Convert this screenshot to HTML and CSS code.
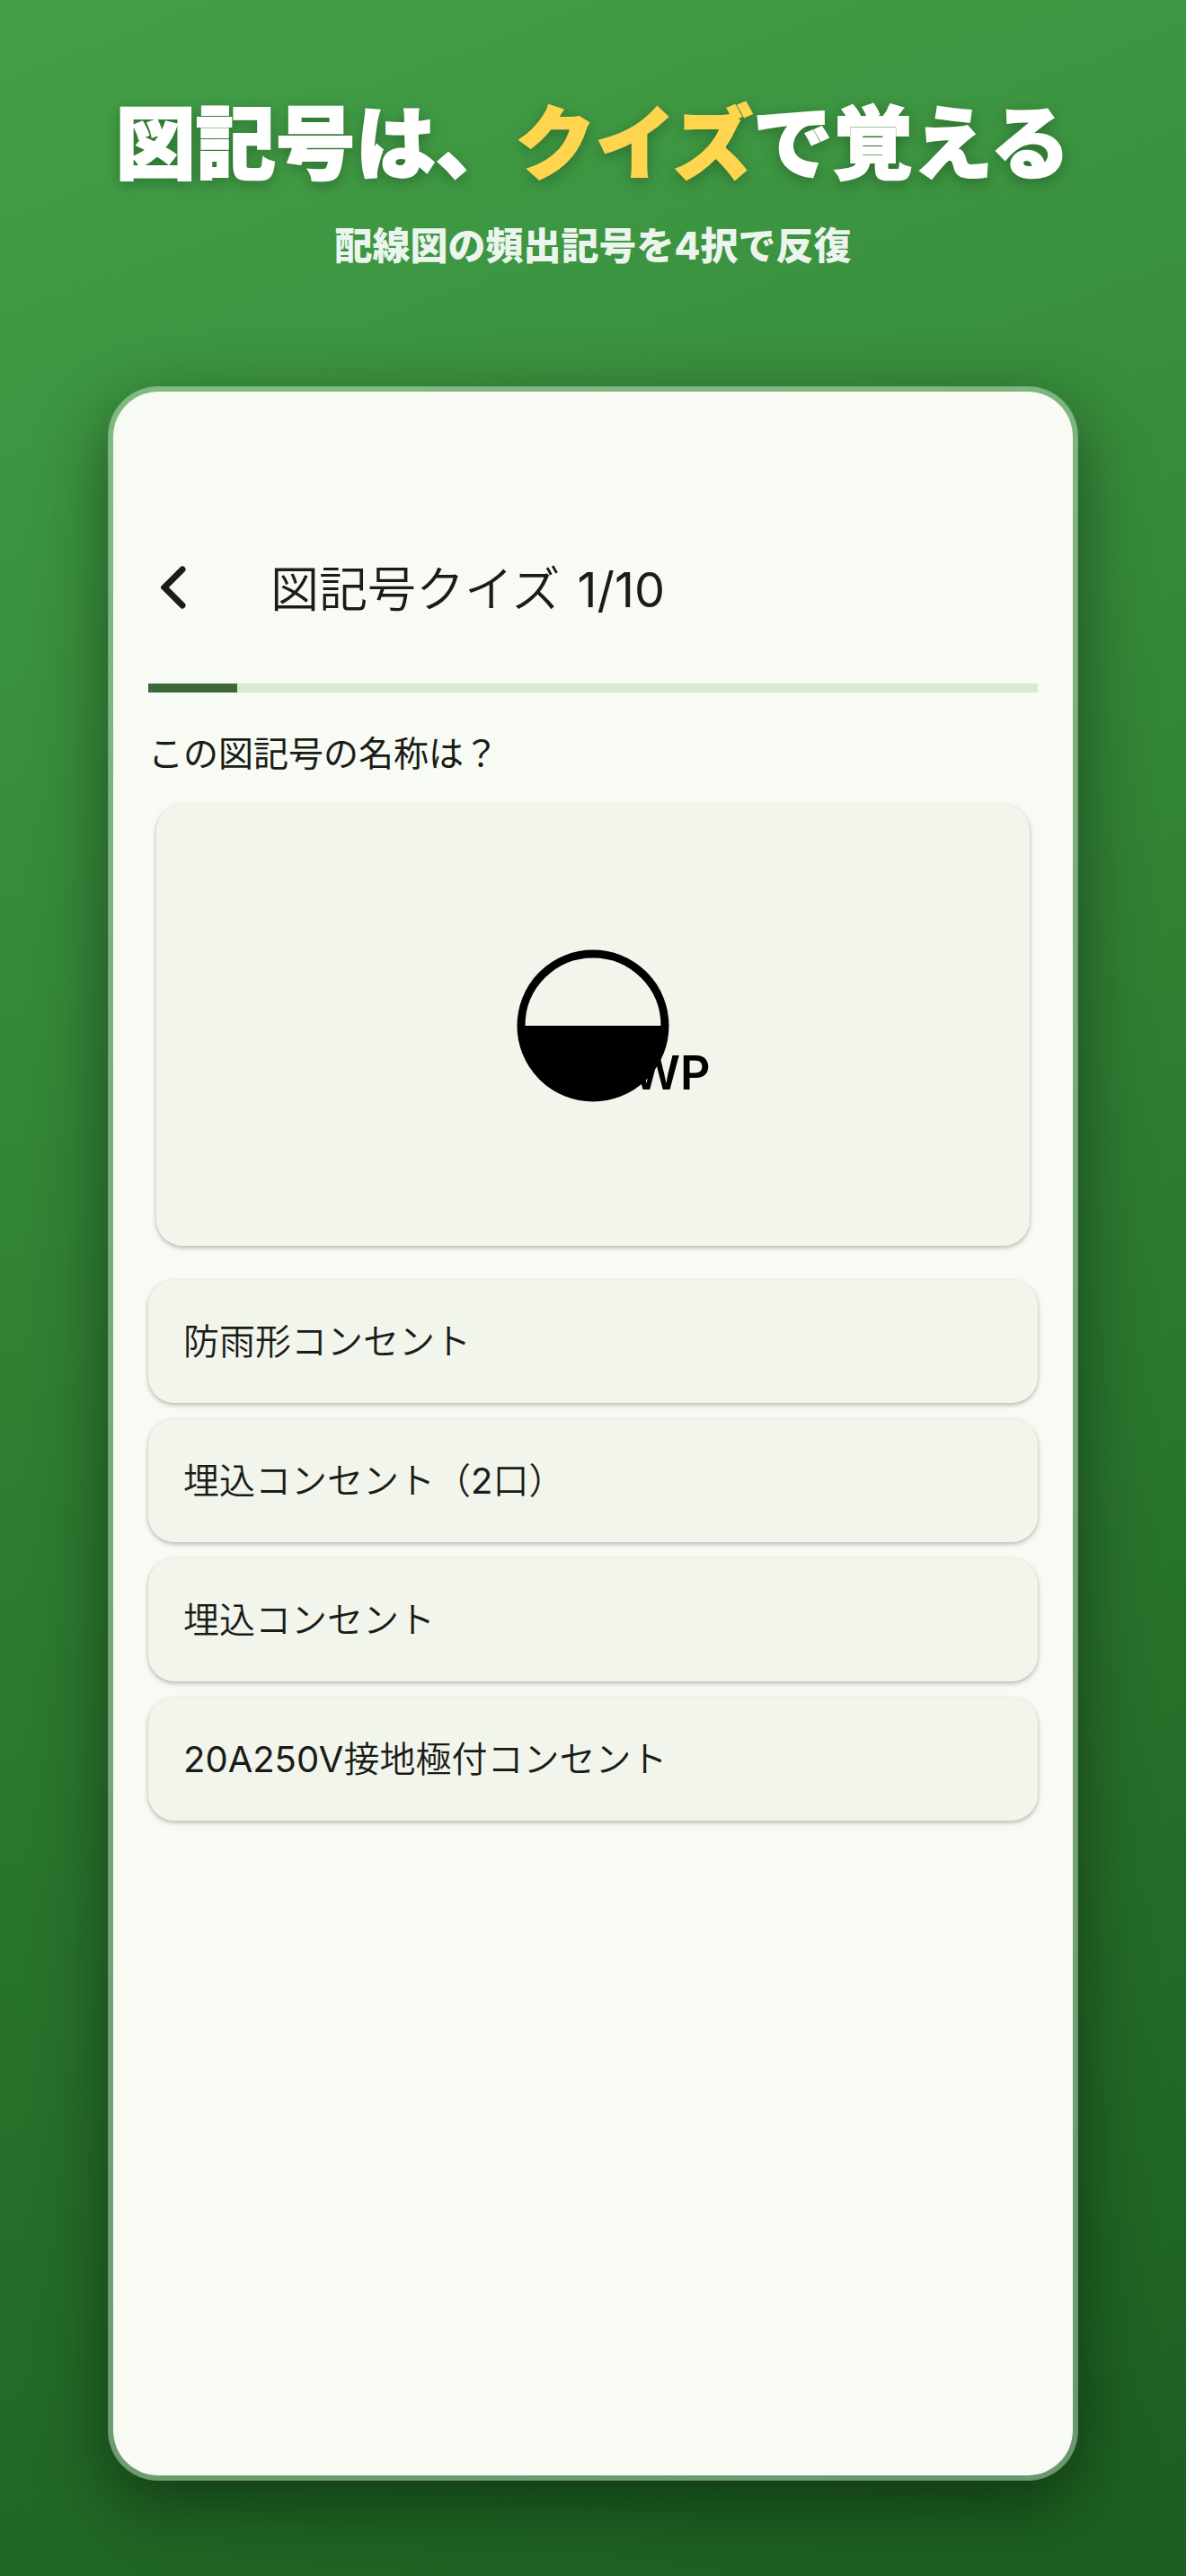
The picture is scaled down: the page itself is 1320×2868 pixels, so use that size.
FILE: index.html
```
<!DOCTYPE html>
<html lang="ja">
<head>
  <meta charset="UTF-8">
  <title>図記号クイズ</title>
  <meta name="viewport" content="width=device-width, initial-scale=1.0">
  <link rel="stylesheet" href="styles.css">
</head>
<body>

  <header class="hero">
    <h1>図記号は、<span class="accent">クイズ</span>で覚える</h1>
    <p>配線図の頻出記号を4択で反復</p>
  </header>

  <main class="screen">
    <div class="app-bar">
      <button class="back" type="button" aria-label="戻る">
        <svg width="28" height="48" viewBox="0 0 28 48" aria-hidden="true">
          <path d="M24 4 L4 24 L24 44" />
        </svg>
      </button>
      <h2>図記号クイズ <span class="latin count">1/10</span></h2>
    </div>

    <progress class="progress" value="1" max="10" aria-label="進捗"></progress>

    <p class="question">この図記号の名称は？</p>

    <!-- 図記号 -->
    <div class="symbol-card">
      <svg class="symbol" width="280" height="180" viewBox="0 0 280 180" role="img" aria-label="図記号">
        <circle class="ring" cx="140" cy="90" r="80" />
        <path d="M60 90 A80 80 0 0 0 220 90 Z" />
        <text x="184" y="161">WP</text>
      </svg>
    </div>

    <!-- 選択肢 -->
    <div class="choices">
      <button type="button">防雨形コンセント</button>
      <button type="button">埋込コンセント（<span class="latin">2</span>口）</button>
      <button type="button">埋込コンセント</button>
      <button type="button"><span class="latin">20A250V</span>接地極付コンセント</button>
    </div>
  </main>

</body>
</html>
```
FILE: styles.css
```
* { box-sizing: border-box; }
body {
  display: flex;
  flex-direction: column;
  min-height: 100vh;
  margin: 0;
  padding: 98px 120px 106px;
  font-family: Inter, "Noto Sans CJK JP", sans-serif;
  color: #1a1c18;
  background: linear-gradient(160deg, #43a047 0%, #2e7d32 50%, #1b5e20 100%);
}
h1, h2, p {
  margin: 0;
}
.hero {
  margin: 0 -60px 126px;
  text-align: center;
  color: #ffffff;
}
.hero h1 {
  font-size: 89px;
  font-weight: 900;
  line-height: 124px;
  -webkit-text-stroke: 2px currentColor;
  filter: drop-shadow(0 4px 8px rgba(0, 0, 0, 0.25));
}
.hero .accent {
  color: #ffd54f;
}
.hero p {
  margin-top: 22px;
  font-size: 42px;
  font-weight: 800;
  line-height: 60px;
  color: rgba(255, 255, 255, 0.92);
}
.screen {
  flex: 1;
  padding: 156px 39px 40px;
  background: #f8fbf3;
  background-clip: padding-box;
  border: 6px solid rgba(255, 255, 255, 0.35);
  border-radius: 56px;
  box-shadow: 0 24px 80px rgba(0, 0, 0, 0.45);
}
.app-bar {
  display: flex;
  align-items: center;
  gap: 94px;
  height: 124px;
}
.back {
  display: flex;
  padding: 0 0 0 14px;
  border: none;
  background: none;
  cursor: pointer;
}
.back svg {
  fill: none;
  stroke: #1a1c18;
  stroke-width: 7;
  stroke-linecap: round;
}
.app-bar h2 {
  padding-bottom: 4px;
  font-size: 54px;
  font-weight: 350;
}
.latin {
  font-weight: 400;
}
.count {
  margin-left: 4px;
}
.progress {
  display: block;
  width: 100%;
  height: 10px;
  margin-top: 45px;
  border: none;
  appearance: none;
  background: #d7e9cf;
}
.progress::-webkit-progress-bar {
  background: #d7e9cf;
}
.progress::-webkit-progress-value {
  background: #3c6939;
}
.progress::-moz-progress-bar {
  background: #3c6939;
}
.question {
  margin-top: 39px;
  font-size: 39px;
  line-height: 58px;
}
.symbol-card {
  display: flex;
  align-items: center;
  justify-content: center;
  height: 491px;
  margin: 28px 9px 38px;
}
.symbol-card,
.choices button {
  background: #f2f5ec;
  border-radius: 29px;
  box-shadow: 0 2px 4px rgba(0, 0, 0, 0.22), 0 2px 8px rgba(0, 0, 0, 0.08);
}
.symbol .ring {
  fill: none;
  stroke: #000000;
  stroke-width: 9;
}
.symbol text {
  font-size: 52px;
  font-weight: 600;
}
.choices {
  display: flex;
  flex-direction: column;
  gap: 18px;
}
.choices button {
  padding: 39px;
  border: none;
  font-family: inherit;
  font-size: 40px;
  font-weight: 350;
  line-height: 59px;
  text-align: left;
  color: #1a1c18;
  cursor: pointer;
}
```
